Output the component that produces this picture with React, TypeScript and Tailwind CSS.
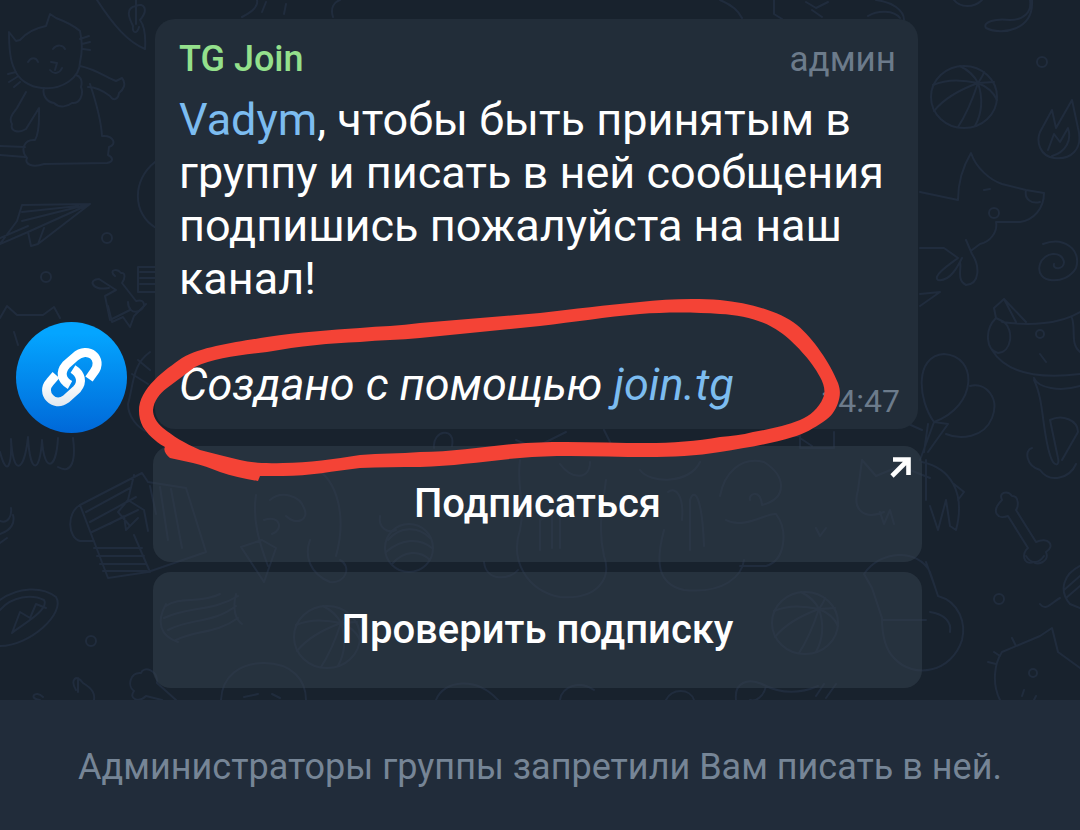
import React from 'react';

interface KeyboardButton {
  id: number;
  label: string;
  external: boolean;
}

const Basketball: React.FC<{ x: number; y: number }> = ({ x, y }) => (
  <g transform={`translate(${x} ${y})`}>
    <ellipse rx="33" ry="31" />
    <path d="M14 -14C-4 -18 -20 -17 -31 -12M14 -14C-8 -6 -22 4 -30 14M14 -14C8 4 2 18 -6 30M14 -14C20 4 17 18 11 29M14 -14C24 -10 30 -4 33 3M14 -14C10 -22 4 -27 -4 -31M14 -14C18 -20 20 -23 20 -25M14 -14L30 -15" />
  </g>
);

const Wallpaper: React.FC = () => (
  <svg
    className="absolute left-0 bottom-0 w-[1080px] h-[700px] opacity-60"
    viewBox="0 0 1080 700"
    fill="none"
    stroke="#263348"
    strokeWidth="2"
    strokeLinecap="round"
    strokeLinejoin="round"
    aria-hidden="true"
  >
    {/* sitting cat */}
    <path d="M16 41L9 32C9 50 11 62 14 68C18 80 30 87 42 88C62 90 80 78 80 62C83 50 82 40 80 31C72 24 64 21 56 18L50 14L46 26C36 28 26 33 20 40ZM28 62C31 57 36 57 38 62M53 49C57 44 63 45 65 49M51 62L57 63L55 70M50 70C54 75 60 73 62 68M8 74L16 72M9 82L17 77M14 87L20 82M80 39L89 36M82 44L90 42M83 49L90 50" />
    <path d="M44 88C42 94 46 102 54 103C60 109 68 106 72 103C80 104 84 94 81 87C83 80 80 76 76 75M80 66C95 69 106 77 116 81L122 78C127 84 123 90 119 93C118 100 113 101 110 96C102 90 96 87 88 87M90 84C96 102 101 118 102 136C114 135 117 145 109 147L108 155C114 158 113 162 107 163L44 164C32 168 24 164 27 158C20 150 24 139 35 140C40 132 39 118 39 108L26 129C18 134 10 131 12 124C8 118 14 112 17 108L26 92M0 146L25 147M0 155L25 157" />
    {/* paper plane */}
    <path d="M90 204L22 205L17 221L0 244L28 232L31 246L38 244L90 204L22 221M90 204L28 232M22 212L78 206M0 238L28 226M38 244L44 228" />
    <circle cx="107" cy="238" r="5" />
    <circle cx="46" cy="277" r="5" />
    {/* string and tag */}
    <path d="M97 0C114 26 128 42 145 49C146 34 143 24 140 20C149 10 144 2 136 6C124 8 130 20 133 26C132 34 137 34 139 27M136 0V24" />
    <path d="M155 162C132 180 132 214 156 228M155 267H138V292H156M140 272H155M140 278H155M140 284H155" />
    <path d="M115 276C108 270 117 268 121 273C126 272 125 279 122 283L136 301C146 298 146 308 139 311C132 314 128 308 128 302M109 288C91 291 88 279 99 279L116 290L105 296L110 320L130 310" />
    <path d="M0 318L7 306L17 315H43L54 307L60 318M14 332L18 345M108 306L112 322L123 317L130 327L134 316L146 304" />
    <path d="M150 352C132 365 134 383 128 404C128 416 137 428 148 432M138 360L150 370M132 374L148 384" />
    {/* fringe */}
    <path d="M0 452C7 478 12 466 11 439C13 476 24 474 28 437C30 475 40 474 42 440C44 472 56 472 58 438M58 467C72 475 76 460 73 438" />
    {/* book and blankets */}
    <path d="M80 505L142 473L148 482L186 488L206 552L148 572L108 578L80 505C66 513 68 538 80 541H94M94 548H142M97 556H144M100 564H146M103 571H147M134 535L150 572M86 512L130 488M90 522L136 497M92 532L138 510M134 475L128 500L118 512L130 526M128 500L144 510L148 531M150 486L156 514M160 487L168 540M171 489L182 548M110 524L124 516L126 530L138 518" />
    <path d="M0 521C8 524 12 516 11 508M0 534C12 530 15 522 13 515M0 543L7 538" />
    {/* surfboard */}
    <path d="M0 600C18 587 42 586 56 597C66 613 30 646 0 646M0 610C12 596 32 594 44 600C50 610 20 626 12 633L20 612L30 618L36 604L46 608" />
    <circle cx="91" cy="641" r="5" />
    <path d="M40 700C28 699 35 689 43 697M76 690C70 680 76 673 83 683C93 689 95 694 94 700M78 678V692M176 700L157 683C158 669 143 666 141 673C130 672 127 686 134 691C128 699 139 703 146 696L162 700" />
    {/* things under the keyboard */}
    <path d="M254 470C276 472 300 460 312 466C340 480 346 520 336 556M256 495C252 520 260 545 268 566M270 500C282 490 300 496 304 508C310 520 296 526 286 516M264 520C280 514 284 530 272 534M310 540C304 556 310 574 330 582C346 584 352 566 340 560M241 547L264 582L276 548L262 540Z" />
    <path d="M166 606C180 596 200 604 220 594M164 618C190 606 212 612 238 596M168 630C190 618 212 624 236 606M176 640C196 630 216 634 238 618M166 604C156 622 160 636 178 642M236 594C232 610 236 620 242 624" />
    <path d="M221 700C222 676 240 663 264 663C292 663 306 680 306 700M244 697L258 694M272 694L280 698" />
    <circle cx="409" cy="548" r="24" />
    <path d="M388 540C400 526 418 526 430 538M386 552C402 538 420 538 432 548M392 564C404 550 420 550 430 560M380 516C378 528 388 534 396 530" />
    <path d="M434 448C432 430 456 426 452 446M516 440L534 448L566 432M604 430L612 446M520 460C516 490 526 500 520 530C510 560 526 590 560 597C598 600 612 578 604 556C598 530 602 510 606 480M540 550V520L552 514V548M560 548V518M484 562C486 582 510 580 518 570M560 464C572 480 590 480 590 462M640 470C650 484 690 484 700 462" />
    <path d="M668 492C676 486 684 496 682 520M690 550V500C694 488 702 494 704 546M664 530C656 560 656 584 684 590C724 594 742 576 744 560M720 496C724 474 740 456 764 462C786 476 788 498 762 505C760 488 748 494 750 500M726 520C744 530 768 512 776 514C788 530 786 560 766 566L740 566" />
    <path d="M436 700C444 680 476 676 498 700M560 700C562 686 580 680 594 690M666 700C672 688 690 688 694 700M786 436H800V448H834V432M800 438L812 446" />
    <path d="M858 490L862 460L876 476L900 466L930 478M858 490C852 510 864 520 884 512M880 512L884 524L890 510L894 524M816 528L820 536L826 528" />
    <Basketball x={805} y={623} />
    <Basketball x={327} y={637} />
    <path d="M736 700C734 682 748 678 762 684C784 696 804 692 818 686M766 686C764 696 756 702 750 700M816 696L824 684M826 698L836 684" />
    {/* top edge */}
    <path d="M242 17C256 10 258 4 257 0M262 12L266 2M284 14L286 4M333 17C330 8 334 2 340 0M720 0C730 4 738 10 742 18M774 0V14L782 19M806 2L816 8L828 2M812 10L822 17M868 16C878 10 894 10 900 18M876 0C892 2 904 10 904 20" />
    <path d="M954 0C960 8 974 8 982 0M1030 0C1032 12 1024 20 1010 20C996 18 982 22 986 28C1002 36 1034 30 1032 0" />
    <circle cx="1042" cy="62" r="5" />
    <Basketball x={964} y={97} />
    {/* flame */}
    <path d="M1052 110L1040 132C1036 142 1040 156 1054 158C1070 160 1084 150 1078 128L1072 100L1056 128ZM1048 150L1054 134L1060 142L1068 128C1072 140 1066 152 1052 156" />
    {/* fox */}
    <path d="M920 192L958 200C958 184 962 168 971 153C976 168 990 180 1002 184L1026 190L1044 193C1044 208 1034 220 1020 222L996 222C998 232 990 242 980 244L972 250M1026 190C1024 200 1032 204 1040 202M984 190L990 189M920 248H944L958 258C950 264 932 276 938 280C950 282 958 266 962 258M966 240L972 254C980 266 980 284 966 285C956 280 962 268 960 262" />
    <circle cx="994" cy="213" r="5" />
    <path d="M1043 244C1064 236 1082 250 1076 268C1066 286 1034 284 1040 264C1044 252 1062 250 1064 262C1064 270 1052 270 1054 264M920 294L940 292L920 306" />
    {/* dog */}
    <path d="M996 318C984 330 986 350 998 353C1012 352 1014 330 1004 322L996 318L994 308L1004 299L1016 322M1004 299L1026 322M1002 322C1030 326 1060 324 1080 312M992 350C1004 370 1030 380 1080 374M1034 378C1038 388 1060 392 1080 386M1034 380C1044 400 1042 430 1050 455C1054 468 1060 466 1058 458L1050 420C1062 414 1078 420 1078 432L1062 460M1032 448C1024 450 1026 466 1040 470C1050 484 1070 478 1076 464M1072 318C1076 330 1070 344 1080 352M1040 354L1046 362" />
    <circle cx="1040" cy="334" r="4" />
    {/* balloons */}
    <path d="M934 422C918 400 914 356 944 354C978 356 978 406 934 422L920 460M934 422L948 424L928 452M970 386C986 382 1000 398 992 418C984 438 960 440 946 434M928 424L924 452M904 422L922 430M926 460V500M922 462C950 468 966 492 956 530L950 526L946 500L938 530L930 506M954 484L964 492L958 500" />
    {/* bone */}
    <path d="M1002 500C998 492 1008 490 1012 496C1020 496 1018 508 1016 510L1036 542C1048 536 1056 546 1046 552C1050 562 1036 566 1034 562C1022 566 1022 552 1028 548L1008 516C998 520 990 512 1002 500Z" />
    {/* helmet, stars and yarn */}
    <path d="M864 574C880 550 918 548 930 572L938 596C960 602 966 624 962 640C952 672 914 680 894 658C884 648 882 630 882 618L872 588ZM926 562L936 590M882 620H926M930 612C944 614 952 622 950 632" />
    <circle cx="999" cy="599" r="5" />
    <path d="M1080 566C1064 574 1058 590 1070 604L1080 608M1064 590L1080 576M1066 598L1080 586M1040 604C1046 612 1052 602 1060 598M1026 556C1032 566 1040 562 1044 556" />
    <path d="M1000 700C992 684 994 664 1002 652L1040 636L1052 628L1058 652L1080 668M1012 638L1016 646M994 652L1000 656M988 662L996 664M1022 696L1024 690M1036 696L1034 700" />
    <circle cx="1033" cy="673" r="4" />
  </svg>
);

const LinkLogo: React.FC = () => (
  <svg viewBox="0 0 111 111" className="w-full h-full" fill="none" aria-hidden="true">
    <defs>
      <linearGradient id="avatar" x1="0" y1="0" x2="0" y2="1">
        <stop offset="0.1" stopColor="#04a5ff" />
        <stop offset="1" stopColor="#0068d8" />
      </linearGradient>
      <linearGradient id="chain" gradientUnits="userSpaceOnUse" x1="0" y1="26" x2="0" y2="86">
        <stop offset="0.55" stopColor="#ffffff" />
        <stop offset="1" stopColor="#dfe6ee" />
      </linearGradient>
    </defs>
    <circle cx="55.5" cy="55.5" r="55.5" fill="url(#avatar)" />
    <g stroke="url(#chain)" strokeWidth="9">
      <path d="M54 63C45 58 44 50 50 43L59 35C72 23 88 37 78 50L73 57" />
      <path d="M40 53L34 60C24 71 38 86 50 77L61 67C67 60 65 52 57 47" />
    </g>
  </svg>
);

const Marker: React.FC = () => (
  <svg
    className="absolute left-0 bottom-0 w-[1080px] h-[700px] pointer-events-none"
    viewBox="0 0 1080 700"
    aria-hidden="true"
  >
    <path
      fill="#f44336"
      fillRule="evenodd"
      d="M139 411C139 388 165 370 182 358C203 346 238 342 267 337C300 332 330 330 360 328C380 326 400 326 420 323L540 313C575 309 605 305 640 302C665 299 695 298 720 300C750 303 779 311 797 325C813 338 830 363 838 383C841 391 840 397 838 403C835 411 831 417 823 422C814 428 804 434 793 437C770 444 745 448 720 452C697 456 672 457 647 457C605 457 560 454 520 458C485 461 455 466 420 467C400 467 380 467 360 468C334 471 309 476 283 476L260 476L258 481C245 479 232 476 220 472C210 468 202 465 193 463L170 458C166 455 163 450 165 447C154 441 147 433 143 427C140 421 139 416 139 411Z
      M153 410C154 401 159 394 167 388L195 367C213 358 240 355 267 352C300 346 330 343 360 342C380 340 400 340 420 338L540 326C575 322 605 317 640 314C665 312 695 312 720 314C743 315 765 321 780 332C793 341 812 361 820 377C824 384 826 392 823 398C819 408 810 416 800 420C786 426 770 429 753 432C742 435 731 436 720 437C697 441 672 443 647 443C602 443 556 440 513 444C481 447 452 452 420 452C400 454 380 453 360 455C334 459 309 463 283 463C260 464 250 462 240 460C226 457 213 453 200 450C184 443 173 436 163 428C156 422 153 416 153 410Z"
    />
  </svg>
);

const ArrowUpRight: React.FC = () => (
  <svg
    className="absolute top-[11px] right-[10px] w-[22px] h-[22px]"
    viewBox="0 0 22 22"
    fill="none"
    stroke="#ffffff"
    strokeWidth="4.6"
    aria-hidden="true"
  >
    <path d="M3 2.5H18.5V18M18 3L2 19" />
  </svg>
);

export default function App() {
  const keyboard: KeyboardButton[] = [
    { id: 1, label: 'Подписаться', external: true },
    { id: 2, label: 'Проверить подписку', external: false }
  ];

  return (
    <div className="min-h-screen flex flex-col bg-[#18222d] font-['Roboto',sans-serif] text-white">
      <main className="relative flex-1 flex flex-col justify-end overflow-hidden">
        <Wallpaper />

        <div className="relative flex gap-[26px] pt-[19px] pb-3 pl-4 pr-[158px]">
          <div className="w-[111px] h-[111px] mt-[303px] shrink-0">
            <LinkLogo />
          </div>

          <div className="flex-1 min-w-0">
            <article className="ml-0.5 mr-1 pt-4 pb-2 pl-6 pr-[18px] rounded-[20px] bg-[#222d39]">
              <header className="flex justify-between items-baseline pr-1 mb-[9px] text-[36px] leading-[48px]">
                <h2 className="font-medium text-[#94e08c]">TG Join</h2>
                <span className="text-[35px] text-[#6c7b8b]">админ</span>
              </header>

              <p className="text-[45px] leading-[53px]">
                <a href="#vadym" className="text-[#7cbcf0]">Vadym</a>, чтобы быть принятым в группу и писать в ней сообщения подпишись пожалуйста на наш канал!
              </p>

              <div className="flex justify-between items-end pt-[53px]">
                <p className="pb-[10px] text-[45px] leading-[53px] italic">
                  Создано с помощью <a href="#join" className="text-[#7cbcf0]">join.tg</a>
                </p>
                <time className="text-[32px] leading-[40px] text-[#6c7b8b]">14:47</time>
              </div>
            </article>

            <div className="mt-[17px] space-y-[10px]">
              {keyboard.map((b) => (
                <button
                  key={b.id}
                  type="button"
                  className="relative block w-full h-[116px] rounded-[18px] bg-[#333f4c]/55 text-[40px] font-medium"
                >
                  {b.label}
                  {b.external && <ArrowUpRight />}
                </button>
              ))}
            </div>
          </div>
        </div>

        <Marker />
      </main>

      <footer className="flex items-center justify-center h-[130px] pt-1 px-4 bg-[#212c3a] text-center">
        <p className="text-[36px] leading-[48px] text-[#768596]">Администраторы группы запретили Вам писать в ней.</p>
      </footer>
    </div>
  );
}
